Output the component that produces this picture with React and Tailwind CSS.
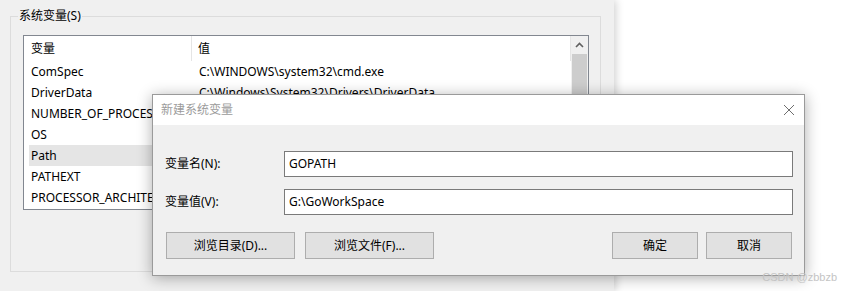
import React from 'react';

const rows = [
  { name: 'ComSpec', value: 'C:\\WINDOWS\\system32\\cmd.exe' },
  { name: 'DriverData', value: 'C:\\Windows\\System32\\Drivers\\DriverData' },
  { name: 'NUMBER_OF_PROCESSORS', value: '' },
  { name: 'OS', value: '' },
  { name: 'Path', value: '', selected: true },
  { name: 'PATHEXT', value: '' },
  { name: 'PROCESSOR_ARCHITECTURE', value: '' },
];

function WinButton({ children, className = '' }) {
  return (
    <button
      type="button"
      className={`h-[27px] bg-[#e1e1e1] border border-[#adadad] text-[12px] text-black ${className}`}
    >
      {children}
    </button>
  );
}

function VarList() {
  return (
    <div className="ml-[12px] mt-[18px] w-[566px] h-[175px] border border-[#828790] bg-white flex overflow-hidden">
      <div className="flex-1 flex flex-col min-w-0">
        <div className="h-[25px] flex shrink-0">
          <div className="w-[168px] pl-[7px] flex items-center border-r border-[#e5e5e5]">变量</div>
          <div className="flex-1 pl-[6px] flex items-center border-r border-[#e5e5e5]">值</div>
        </div>
        {rows.map((r) => (
          <div key={r.name} className="h-[21px] flex shrink-0 pl-[5px]">
            <div className={`flex-1 flex ${r.selected ? 'bg-[#e5e5e5]' : ''}`}>
              <div className="w-[123px] pl-[2px] flex items-center whitespace-nowrap overflow-hidden">{r.name}</div>
              <div className="w-[40px]" />
              <div className="flex-1 pl-[7px] flex items-center whitespace-nowrap overflow-hidden">{r.value}</div>
            </div>
          </div>
        ))}
      </div>
      <div className="w-[17px] bg-[#f0f0f0] flex flex-col items-center">
        <div className="h-[17px] w-full flex items-center justify-center">
          <svg width="9" height="6" viewBox="0 0 9 6">
            <path d="M1 5 L4.5 1.5 L8 5" fill="none" stroke="#606060" strokeWidth="1.6" />
          </svg>
        </div>
        <div className="w-[15px] h-[140px] bg-[#cdcdcd] mt-[1px]" />
      </div>
    </div>
  );
}

export default function App() {
  return (
    <div className="relative w-[852px] h-[291px] bg-white overflow-hidden text-[12px] text-black font-['Noto_Sans','Noto_Sans_CJK_SC',sans-serif]">
      <div className="w-[614px] h-full bg-[#f0f0f0] pt-[16px] pl-[10px] shadow-[2px_0_8px_rgba(0,0,0,0.18)]">
        <div className="relative w-[591px] h-[256px] border border-[#dcdcdc]">
          <span className="absolute left-[7px] -top-[10px] px-[1px] bg-[#f0f0f0] leading-[18px]">系统变量(S)</span>
          <VarList />
        </div>
      </div>

      <div className="absolute left-[152px] top-[94px] w-[653px] h-[182px] border border-[#9a9a9a] bg-[#f0f0f0] shadow-[0_2px_14px_rgba(0,0,0,0.32)] flex flex-col">
        <div className="h-[30px] bg-white flex items-center justify-between pl-[8px] pr-[8px] shrink-0">
          <span className="text-[#9b9b9b]">新建系统变量</span>
          <svg width="12" height="12" viewBox="0 0 12 12" className="mr-[1px]">
            <path d="M1 1 L11 11 M11 1 L1 11" stroke="#6e6e6e" strokeWidth="1" />
          </svg>
        </div>
        <div className="flex-1 pl-[12px] pr-[11px] pt-[26px]">
          <div className="flex items-center h-[26px]">
            <label className="w-[119px]">变量名(N):</label>
            <div className="flex-1 h-full bg-white border border-[#7a7a7a] flex items-center pl-[4px]">GOPATH</div>
          </div>
          <div className="flex items-center h-[26px] mt-[12px]">
            <label className="w-[119px]">变量值(V):</label>
            <div className="flex-1 h-full bg-white border border-[#7a7a7a] flex items-center pl-[4px]">G:\GoWorkSpace</div>
          </div>
          <div className="flex mt-[17px] pl-[1px] pr-[1px]">
            <WinButton className="w-[129px]">浏览目录(D)...</WinButton>
            <WinButton className="w-[129px] ml-[10px]">浏览文件(F)...</WinButton>
            <div className="flex-1" />
            <WinButton className="w-[86px]">确定</WinButton>
            <WinButton className="w-[86px] ml-[8px]">取消</WinButton>
          </div>
        </div>
      </div>

      <span className="absolute right-[15px] bottom-[6px] text-[11px] text-[#c4c4c4] font-['Liberation_Sans',sans-serif]">CSDN @zbbzb</span>
    </div>
  );
}
